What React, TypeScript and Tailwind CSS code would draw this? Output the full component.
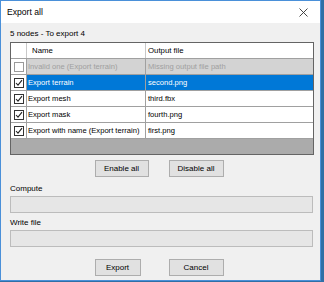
const rows = [
  { name: "Invalid one (Export terrain)", file: "Missing output file path", checked: false, state: "invalid" },
  { name: "Export terrain", file: "second.png", checked: true, state: "selected" },
  { name: "Export mesh", file: "third.fbx", checked: true, state: "normal" },
  { name: "Export mask", file: "fourth.png", checked: true, state: "normal" },
  { name: "Export with name (Export terrain)", file: "first.png", checked: true, state: "normal" },
];

function CheckBox({ checked, disabled }: { checked: boolean; disabled?: boolean }) {
  return (
    <div
      className={`w-[10px] h-[10px] bg-white border flex items-center justify-center ${
        disabled ? "border-[#9a9a9a]" : "border-[#333333]"
      }`}
    >
      {checked && (
        <svg width="8" height="8" viewBox="0 0 8 8">
          <polyline points="1,4 3,6.2 7,1.2" fill="none" stroke="#222" strokeWidth="1.1" />
        </svg>
      )}
    </div>
  );
}

function Button({ label, className = "" }: { label: string; className?: string }) {
  return (
    <div
      className={`h-[17px] bg-[#e1e1e1] border border-[#adadad] flex items-center justify-center text-[8px] text-black ${className}`}
    >
      {label}
    </div>
  );
}

export default function App() {
  return (
    <div className="w-[324px] h-[282px] bg-[#2f6fa6] overflow-hidden font-['Liberation_Sans',Arial,sans-serif]">
      <div className="w-[321px] h-[281px] bg-[#f0f0f0] border border-[#4a90d9] flex flex-col">
        {/* title bar */}
        <div className="h-[22px] bg-white flex items-center justify-between pl-[6px] pr-[12px]">
          <span className="text-[8.6px] text-black">Export all</span>
          <svg width="9" height="9" viewBox="0 0 9 9">
            <path d="M0.5 0.5 L8.5 8.5 M8.5 0.5 L0.5 8.5" stroke="#333" strokeWidth="0.9" />
          </svg>
        </div>

        <div className="flex flex-col pl-[9px] pr-[6px] pt-[6px]">
          <div className="text-[8px] leading-[10px] text-black">5 nodes - To export 4</div>

          {/* grid */}
          <div className="mt-[3px] h-[113px] border border-[#646464] bg-[#ababab] flex flex-col">
            <div className="h-[16px] bg-white flex text-[7.8px] text-black border-b border-[#a0a0a0]">
              <div className="w-[16px] border-r border-[#c8c8c8]" />
              <div className="w-[119px] border-r border-[#c8c8c8] flex items-center pl-[5px]">Name</div>
              <div className="flex-1 flex items-center pl-[2px]">Output file</div>
            </div>
            {rows.map((r) => {
              const bg =
                r.state === "selected" ? "bg-[#0078d7]" : r.state === "invalid" ? "bg-[#d3d3d3]" : "bg-white";
              const txt =
                r.state === "selected" ? "text-white" : r.state === "invalid" ? "text-[#a0a0a0]" : "text-black";
              return (
                <div key={r.name} className={`h-[16px] flex text-[7.6px] border-b border-[#a0a0a0] ${bg} ${txt}`}>
                  <div className="w-[16px] border-r border-[#a0a0a0] bg-white flex items-center justify-center">
                    <CheckBox checked={r.checked} disabled={r.state === "invalid"} />
                  </div>
                  <div className="w-[119px] border-r border-[#a0a0a0] flex items-center pl-[1px] whitespace-nowrap overflow-hidden">
                    {r.name}
                  </div>
                  <div className="flex-1 flex items-center pl-[2px] whitespace-nowrap overflow-hidden">{r.file}</div>
                </div>
              );
            })}
          </div>

          <div className="mt-[5px] flex justify-center gap-[20px] mr-[6px]">
            <Button label="Enable all" className="w-[54px]" />
            <Button label="Disable all" className="w-[55px]" />
          </div>

          <div className="mt-[7px] text-[8px] leading-[10px] text-black">Compute</div>
          <div className="mt-[2px] h-[17px] bg-[#e6e6e6] border border-[#bcbcbc] mr-[1px]" />

          <div className="mt-[5px] text-[8px] leading-[10px] text-black">Write file</div>
          <div className="mt-[2px] h-[17px] bg-[#e6e6e6] border border-[#bcbcbc] mr-[1px]" />

          <div className="mt-[12px] flex justify-center gap-[28px] mr-[6px]">
            <Button label="Export" className="w-[46px]" />
            <Button label="Cancel" className="w-[55px]" />
          </div>
        </div>
      </div>
    </div>
  );
}
